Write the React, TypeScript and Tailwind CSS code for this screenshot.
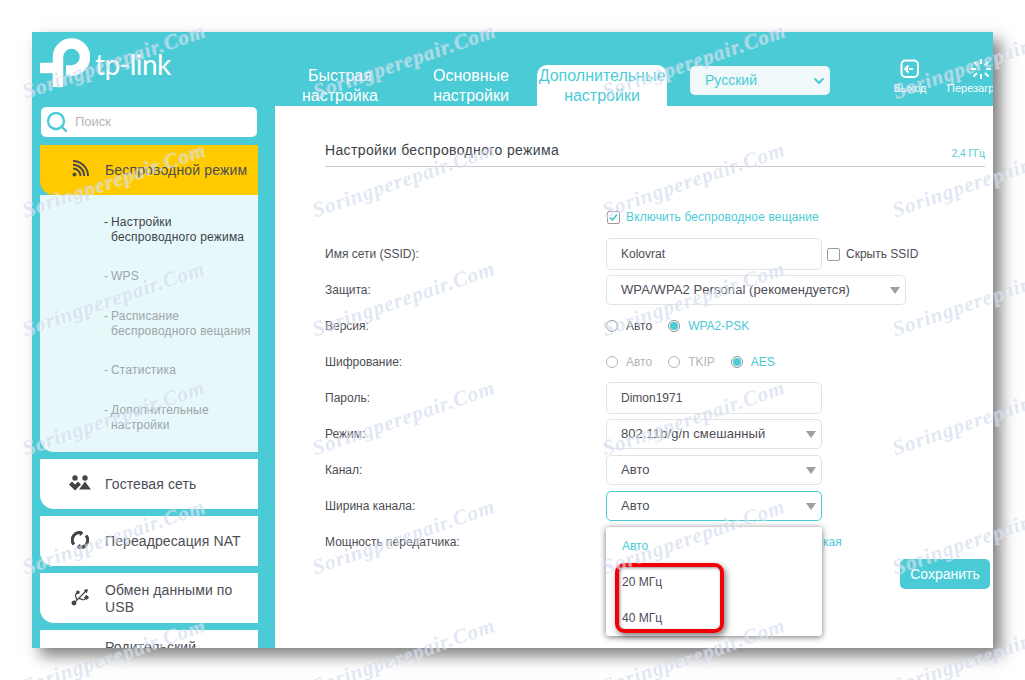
import { ChevronDown, Search } from "lucide-react";
import { FaUsb } from "react-icons/fa";

const teal = "text-[#4acbd6]";

function Watermarks() {
  const cells = [];
  for (let i = 0; i < 24; i++) cells.push(i);
  return (
    <div className="absolute left-[25px] top-[2px] w-[1160px] grid grid-cols-4 auto-rows-[119px] pointer-events-none z-30">
      {cells.map((i) => (
        <div key={i} className="w-[290px] h-[119px] flex items-center">
          <span className="block -ml-[7px] -rotate-[19deg] origin-center w-[190px] text-center whitespace-nowrap font-['Liberation_Serif',serif] italic font-bold text-[21px] tracking-[0.9px] text-[#c6d0ea]/50 [text-shadow:1px_1px_0_rgba(255,255,255,0.45)]">
            Soringperepair.Com
          </span>
        </div>
      ))}
    </div>
  );
}

function Logo() {
  return (
    <div className="flex items-start shrink-0 w-[250px] h-[74px] pl-[8px] pt-[6px]">
      <svg width="50" height="50" viewBox="0 0 50 50" className="shrink-0">
        <path d="M0 30h23" stroke="#fff" strokeWidth="10.5" fill="none" />
        <path
          d="M18 49V19a13.5 13.5 0 1 1 13.5 13.5H26"
          stroke="#fff"
          strokeWidth="10.5"
          fill="none"
        />
      </svg>
      <span className="text-[28px] leading-none text-white font-['Lato',sans-serif] ml-[5px] mt-[12px] tracking-[-0.5px]">tp-link</span>
    </div>
  );
}

function HeaderTab({ top, bottom, active }: { top: string; bottom: string; active?: boolean }) {
  if (active) {
    return (
      <div className={`w-[130px] shrink-0 h-[41px] pt-[1px] bg-white rounded-t-[10px] text-center text-[16px] leading-[20px] ${teal}`}>
        <div>{top}</div>
        <div>{bottom}</div>
      </div>
    );
  }
  return (
    <div className="w-[130px] shrink-0 pt-[1px] text-center text-[16px] leading-[20px] text-white h-[41px]">
      <div>{top}</div>
      <div>{bottom}</div>
    </div>
  );
}

function Header() {
  return (
    <div className="h-[74px] flex overflow-hidden">
      <Logo />
      <div className="flex items-end shrink-0 gap-[1px] -ml-[7px]">
        <HeaderTab top="Быстрая" bottom="настройка" />
        <HeaderTab top="Основные" bottom="настройки" />
        <HeaderTab top="Дополнительные" bottom="настройки" active />
      </div>
      <div className="ml-[23px] mt-[34px] shrink-0 w-[140px] h-[29px] rounded-[5px] bg-[#f0f8f9] flex items-center justify-between pl-[15px] pr-[3px]">
        <span className={`text-[14px] ${teal}`}>Русский</span>
        <ChevronDown size={16} strokeWidth={3} className="text-[#4acbd6]" />
      </div>
      <div className="ml-[58px] mt-[27px] w-[44px] flex flex-col items-center text-white shrink-0">
        <svg width="20" height="20" viewBox="0 0 20 20" fill="none">
          <rect x="1.5" y="1.5" width="16.5" height="16.5" rx="4" stroke="#fff" strokeWidth="2" />
          <path d="M5 10h3M9 10h4" stroke="#fff" strokeWidth="2" />
          <path d="M8.5 6.5 5 10l3.5 3.500" stroke="#fff" strokeWidth="2" />
        </svg>
        <span className="text-[11px] leading-[13px] mt-[3px]">Выход</span>
      </div>
      <div className="ml-[15px] mt-[27px] flex flex-col items-center text-white shrink-0">
        <svg width="20" height="20" viewBox="0 0 20 20" stroke="#fff" strokeWidth="2">
          <path d="M10 0v5M10 15v5M0 10h5M15 10h5M3 3l3.500 3.500M14 14l3.500 3.500M17 3l-3.500 3.500M6 14l-3.500 3.500" />
        </svg>
        <span className="text-[11px] leading-[13px] mt-[3px] whitespace-nowrap">Перезагрузка</span>
      </div>
    </div>
  );
}

function WifiIcon() {
  return (
    <svg width="17" height="17" viewBox="0 0 17 17" fill="none" stroke="#4a4a4a" strokeWidth="2">
      <circle cx="2.500" cy="14.500" r="2" fill="#4a4a4a" stroke="none" />
      <path d="M1 8.500a7.500 7.500 0 0 1 7.500 7.500" />
      <path d="M1 4.800a11.200 11.200 0 0 1 11.200 11.200" />
      <path d="M1 1a15 15 0 0 1 15 15" />
    </svg>
  );
}

function GuestIcon() {
  return (
    <svg width="22" height="16" viewBox="0 0 22 16" fill="#444">
      <circle cx="6" cy="3" r="2.700" />
      <circle cx="16" cy="3" r="2.700" />
      <path d="M0 9.500 3 6.500 6 9.500 9 6.500 12 9.500 6 15.500Z" />
      <path d="M16 6.500 22 14.500H10Z" />
    </svg>
  );
}

function NatIcon() {
  return (
    <svg width="18" height="18" viewBox="0 0 18 18" fill="none" stroke="#444" strokeWidth="3">
      <path d="M3 13.500A7.300 7.300 0 0 1 10.500 1.800" />
      <path d="M15 4.500A7.300 7.300 0 0 1 7.500 16.200" />
      <path d="M9 0l3 2-3 2.500z" fill="#444" strokeWidth="1" />
      <path d="M9 18l-3-2 3-2.500z" fill="#444" strokeWidth="1" />
    </svg>
  );
}

function ParentIcon() {
  return (
    <svg width="22" height="16" viewBox="0 0 22 16" fill="#444">
      <ellipse cx="6" cy="8" rx="5.500" ry="5" />
      <ellipse cx="16" cy="8" rx="5.500" ry="5" />
    </svg>
  );
}

function MenuItem({ icon, label }: { icon: React.ReactNode; label: React.ReactNode }) {
  return (
    <div className="h-[50px] shrink-0 bg-white rounded-bl-[14px] flex items-center mt-[7px]">
      <div className="w-[65px] pl-[15px] flex justify-center -mt-[3px]">{icon}</div>
      <div className="text-[14px] leading-[17px] tracking-[0.1px] text-[#4d4d55]">{label}</div>
    </div>
  );
}

function SubItem({ children, className }: { children: React.ReactNode; className: string }) {
  return (
    <div className={`relative pl-[71px] text-[12px] leading-[15px] tracking-[0.2px] ${className}`}>
      <span className="absolute left-[64px] top-0">-</span>
      {children}
    </div>
  );
}

function Sidebar() {
  return (
    <div className="w-[243px] shrink-0 pl-[8px] pr-[17px] overflow-hidden">
      <div className="ml-[1px] w-[216px] h-[30px] mt-[1px] bg-white rounded-[5px] flex items-center pl-[4px]">
        <Search size={24} strokeWidth={2.4} className="text-[#4acbd6]" />
        <span className="ml-[6px] text-[13px] text-[#b5b5b5]">Поиск</span>
      </div>
      <div className="h-[50px] mt-[8px] bg-[#ffcb00] rounded-bl-[14px] flex items-center">
        <div className="w-[65px] pl-[15px] flex justify-center -mt-[3px]"><WifiIcon /></div>
        <div className="text-[14px] tracking-[0.15px] text-[#4d4d55]">Беспроводной режим</div>
      </div>
      <div className="h-[257px] bg-[#e7f8fa] rounded-bl-[14px] pt-[20px]">
        <SubItem className="text-[#3d3f4a]">Настройки<br />беспроводного режима</SubItem>
        <SubItem className="text-[#9ea5a8] mt-[24px]">WPS</SubItem>
        <SubItem className="text-[#9ea5a8] mt-[25px]">Расписание<br />беспроводного вещания</SubItem>
        <SubItem className="text-[#9ea5a8] mt-[24px]">Статистика</SubItem>
        <SubItem className="text-[#9ea5a8] mt-[25px]">Дополнительные<br />настройки</SubItem>
      </div>
      <MenuItem icon={<GuestIcon />} label="Гостевая сеть" />
      <MenuItem icon={<NatIcon />} label="Переадресация NAT" />
      <MenuItem
        icon={<FaUsb size={22} className="text-[#444] -rotate-45" />}
        label={<span className="block mt-[1px]">Обмен данными по<br />USB</span>}
      />
      <MenuItem icon={<ParentIcon />} label={<span className="block mt-[1px]">Родительский<br />контроль</span>} />
    </div>
  );
}

function Radio({ on, faded }: { on?: boolean; faded?: boolean }) {
  return (
    <span className={`w-[12px] h-[12px] rounded-full border flex items-center justify-center bg-white ${faded ? "border-[#b5b5b5]" : "border-[#8f8f8f]"}`}>
      {on && <span className="w-[8px] h-[8px] rounded-full bg-[#4acbd6]" />}
    </span>
  );
}

function Row({ label, children }: { label: string; children?: React.ReactNode }) {
  return (
    <div className="h-[36px] flex items-center text-[12px]">
      <div className="w-[281px] shrink-0 text-[#4d4d55]">{label}</div>
      {children}
    </div>
  );
}

function SelectBox({ value, wide, focus }: { value: string; wide?: boolean; focus?: boolean }) {
  return (
    <div className={`h-[30px] ${wide ? "w-[300px]" : "w-[216px]"} rounded-[5px] border ${focus ? "border-[#4acbd6]" : "border-[#e3e3e3]"} bg-white flex items-center justify-between pl-[14px] pr-[5px] text-[13px] tracking-[0.08px] text-[#4d4d55]`}>
      <span>{value}</span>
      <span className="w-0 h-0 border-l-[5px] border-r-[5px] border-t-[7px] border-l-transparent border-r-transparent border-t-[#9e9e9e]" />
    </div>
  );
}

function TextBox({ value }: { value: string }) {
  return (
    <div className="h-[32px] w-[216px] rounded-[5px] border border-[#e3e3e3] bg-white flex items-center pl-[14px] text-[#4d4d55]">
      {value}
    </div>
  );
}

function Content() {
  return (
    <div className="flex-1 bg-white relative pl-[50px] pr-[8px] pt-[34px] h-[542px]">
      <div className="h-[27px] border-b border-[#c9c9c9] flex justify-between">
        <span className="text-[14px] leading-[20px] tracking-[0.36px] text-[#3d3f4a]">Настройки беспроводного режима</span>
        <span className={`text-[10px] leading-[12px] mt-[8px] ${teal}`}>2,4 ГГц</span>
      </div>
      <div className="h-[36px] mt-[32px] flex items-center pl-[281px] mb-[1px]">
        <span className="w-[13px] h-[13px] rounded-[2px] border border-[#9a9a9a] flex items-center justify-center mr-[6px] ml-[1px]">
          <svg width="9" height="9" viewBox="0 0 9 9" fill="none" stroke="#4acbd6" strokeWidth="1.800"><path d="M1 4.500 3.500 7 8 1.500" /></svg>
        </span>
        <span className={`text-[12px] tracking-[0.14px] ${teal}`}>Включить беспроводное вещание</span>
      </div>
      <Row label="Имя сети (SSID):">
        <TextBox value="Kolovrat" />
        <span className="w-[13px] h-[13px] rounded-[2px] border border-[#9a9a9a] ml-[5px] mr-[6px]" />
        <span className="text-[#4d4d55]">Скрыть SSID</span>
      </Row>
      <Row label="Защита:"><SelectBox value="WPA/WPA2 Personal (рекомендуется)" wide /></Row>
      <Row label="Версия:">
        <Radio />
        <span className="ml-[8px] text-[#4d4d55]">Авто</span>
        <span className="ml-[16px]"><Radio on /></span>
        <span className={`ml-[8px] ${teal}`}>WPA2-PSK</span>
      </Row>
      <Row label="Шифрование:">
        <Radio faded />
        <span className="ml-[8px] text-[#b5b5b5]">Авто</span>
        <span className="ml-[16px]"><Radio faded /></span>
        <span className="ml-[8px] text-[#b5b5b5]">TKIP</span>
        <span className="ml-[16px]"><Radio on /></span>
        <span className={`ml-[8px] ${teal}`}>AES</span>
      </Row>
      <Row label="Пароль:"><TextBox value="Dimon1971" /></Row>
      <Row label="Режим:"><SelectBox value="802.11b/g/n смешанный" /></Row>
      <Row label="Канал:"><SelectBox value="Авто" /></Row>
      <Row label="Ширина канала:"><SelectBox value="Авто" focus /></Row>
      <Row label="Мощность передатчика:">
        <span className={`ml-[216px] pl-[1px] ${teal}`}>кая</span>
      </Row>
      <div className="flex justify-end -mt-[1px]">
        <div className="w-[90px] h-[30px] -mr-[5px] rounded-[5px] bg-[#4acbd6] text-white text-[14px] flex items-center justify-center">Сохранить</div>
      </div>

      <div className="absolute left-[331px] top-[421px] w-[216px] h-[109px] bg-white rounded-[3px] shadow-[0_1px_6px_rgba(0,0,0,0.55)] text-[12px] pl-[16px] z-10">
        <div className={`h-[36px] mt-[1px] flex items-center ${teal}`}>Авто</div>
        <div className="h-[36px] flex items-center text-[#4d4d55]">20 МГц</div>
        <div className="h-[36px] flex items-center text-[#4d4d55]">40 МГц</div>
      </div>
      <div className="absolute left-[340px] top-[457px] w-[109px] h-[70px] rounded-[9px] border-[4px] border-[#f20008] shadow-[2px_3px_6px_rgba(0,0,0,0.5),inset_1px_1px_3px_rgba(0,0,0,0.45)] z-20" />
    </div>
  );
}

export default function App() {
  return (
    <div className="relative w-[1025px] h-[680px] overflow-hidden bg-white pl-[32px] pt-[32px] font-['Liberation_Sans',sans-serif]">
      <div className="w-[961px] h-[616px] bg-[#4acbd6] overflow-hidden shadow-[8px_8px_14px_rgba(0,0,0,0.5)]">
        <Header />
        <div className="flex h-[542px]">
          <Sidebar />
          <Content />
        </div>
      </div>
      <Watermarks />
    </div>
  );
}
